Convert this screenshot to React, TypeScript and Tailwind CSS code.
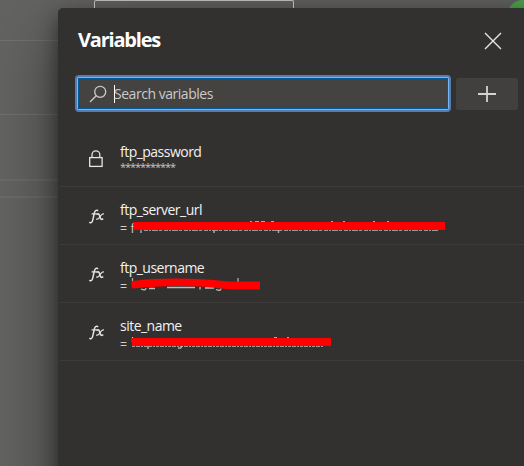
import type { ReactNode } from "react";

type Variable = {
  name: string;
  value: string;
  secret?: boolean;
  mask?: ReactNode;
};

function Lock() {
  return (
    <svg width="14" height="18" viewBox="0 0 14 18" fill="none" stroke="#e6e5e3" strokeWidth="1.3">
      <rect x="0.7" y="7.6" width="12.4" height="8.8" />
      <path d="M3 7.500V4.700a3.900 3.900 0 0 1 7.800 0v2.800" />
    </svg>
  );
}

function Fx() {
  return (
    <svg width="16" height="16" viewBox="0 0 16 16" fill="none" stroke="#e6e5e3" strokeLinecap="round">
      <path d="M.8 13.500c1.600.6 2.500-.5 3-2.600L5.300 4.200C5.800 2 6.800.8 8.600 1.500" strokeWidth="1.500" />
      <path d="M3 4.900h4.600" strokeWidth="1.100" />
      <path d="M8.300 5.100c1.500-.6 2 .3 2.400 2.100.5 2.300.9 3.700 3 2.900" strokeWidth="1.600" />
      <path d="M14.400 4.900c-1.500-.3-2.500 1.500-3.400 2.800-.8 1.200-1.700 2.900-3.400 2.500" strokeWidth="1.250" />
    </svg>
  );
}

const serverMask = (
  <svg className="absolute left-0 top-0" width="330" height="18" fill="none">
    <path d="M24 11.500H318" stroke="#999" strokeWidth="1" strokeDasharray="4 1 2 1 6 1 3 2" />
    <path d="M21 9v5M94 9v5M158.500 9v5" stroke="#aaa" strokeWidth="1.400" />
    <path d="M130 2.500h2M135 2.500h4M141 2.500h4M151 2.500h3M211 2.500h2M223 2.500h2M253 2.500h2M267 2.500h2" stroke="#aaa" />
    <path d="M13.500 7H325" stroke="#f00" strokeWidth="8" />
  </svg>
);

const userMask = (
  <svg className="absolute left-0 top-0" width="145" height="18" fill="none">
    <path d="M12.500 1v8M118 1v5" stroke="#aaa" strokeWidth="1.300" />
    <path d="M21 12q5 2 5-1M29 11.500h6M47 10.500h28M80 10v2.500M85 11h9M96 12.500q5 2 5-1" stroke="#bbb" strokeWidth="1.300" />
    <path d="M12 4C43 .7 72 .8 108 4.500h32v8H110C80 8 44 8 12 11.500z" fill="#f00" />
  </svg>
);

const siteMask = (
  <svg className="absolute left-0 top-0" width="220" height="18" fill="none">
    <path d="M12 11.500H204" stroke="#999" strokeWidth="1" strokeDasharray="3 1 4 1 2 1" />
    <path d="M28 10v4M58 13q4 1 4-3M12.500 2v5" stroke="#bbb" strokeWidth="1.300" />
    <path d="M154 2.500h3M167 2.500h2" stroke="#aaa" />
    <path d="M12 7H211" stroke="#f00" strokeWidth="8" />
  </svg>
);

const variables: Variable[] = [
  { name: "ftp_password", value: "***********", secret: true },
  { name: "ftp_server_url", value: "= f", mask: serverMask },
  { name: "ftp_username", value: "=", mask: userMask },
  { name: "site_name", value: "=", mask: siteMask },
];

function Row({ item }: { item: Variable }) {
  return (
    <li className="flex h-[58px] border-b border-[#3d3c3a] pt-[14px]">
      <div className="ml-[29px] flex h-8 w-[31px] shrink-0 items-center">
        {item.secret ? <Lock /> : <Fx />}
      </div>
      <div className="min-w-0 flex-1">
        <div className="h-[18px] text-[14px] font-medium leading-[17px] tracking-[-0.52px] text-[#f2f1ef]">{item.name}</div>
        <div
          className={
            item.secret
              ? "h-[18px] text-[11px] font-medium leading-[12px] tracking-[-1.05px] text-[#c8c6c4]"
              : "relative h-[18px] whitespace-pre text-[12.5px] font-medium leading-[19px] tracking-[0.1px] text-[#d0cecc]"
          }
        >
          {item.value}
          {item.mask}
        </div>
      </div>
    </li>
  );
}

export default function App() {
  return (
    <main className="relative h-[466px] w-[524px] overflow-hidden bg-[#636362] font-['Open_Sans','Noto_Sans',sans-serif]">
      <div className="absolute left-0 top-[40px] h-px w-full bg-[#717170]" />
      <div className="absolute left-0 top-[114px] h-px w-full bg-[#717170]" />
      <div className="absolute left-0 top-[179px] h-[2px] w-full bg-[#6b6b6a]" />
      <div className="absolute left-0 top-[196px] h-[2px] w-full bg-[#6b6b6a]" />
      <div className="absolute left-[507px] top-0 size-8 rounded-full bg-[#4fa84f]" />
      <section className="absolute left-[58px] top-[8px] h-[520px] w-[540px] rounded-tl-[5px] bg-[#32312f] shadow-[0_26px_70px_0_rgba(0,0,0,0.46),0_8px_20px_0_rgba(0,0,0,0.46)]">
        <div className="w-[466px]">
          <header className="flex h-[67px] items-start justify-between pl-5 pr-[22px]">
            <h1 className="pt-[18px] text-[20px] font-bold leading-7 tracking-[-1.2px] text-white">Variables</h1>
            <svg className="mt-[24px]" width="18" height="18" viewBox="0 0 18 18" stroke="#e6e5e3" strokeWidth="1.400">
              <path d="M1 1l16 16M17 1L1 17" />
            </svg>
          </header>
          <div className="flex items-center pl-[17px]">
            <div className="h-[37px] w-[376px] rounded-[4px] bg-[#587cae] p-[2px]">
              <div className="h-full rounded-[2px] bg-[#76b6f3] p-px">
                <div className="flex h-full items-center border border-[#005a9e] bg-[#444341] pl-[10px]">
                  <svg width="18" height="18" viewBox="0 0 18 18" fill="none" stroke="#cccac8" strokeWidth="1.300">
                    <circle cx="11.200" cy="6.800" r="5.500" />
                    <path d="M7.200 10.800L1 17" />
                  </svg>
                  <span className="ml-[7px] h-[18px] w-px bg-white" />
                  <span className="-ml-px text-[14px] font-medium leading-5 tracking-[-0.47px] text-[#cccac8]">Search variables</span>
                </div>
              </div>
            </div>
            <button className="ml-[5px] flex h-8 w-[62px] items-center justify-center rounded-[2px] bg-[#41403e]" aria-label="Add variable">
              <svg width="18" height="18" viewBox="0 0 18 18" stroke="#d4d3d1" strokeWidth="1.800"><path d="M0 9h18M9 1v16" /></svg>
            </button>
          </div>
          <ul className="ml-[2px] mt-[17px]">
            {variables.map((item) => <Row key={item.name} item={item} />)}
          </ul>
        </div>
      </section>
      <div className="absolute left-[94px] top-0 h-2 w-[200px] rounded-t-[2px] border border-b-0 border-[#b4b3b1]" />
    </main>
  );
}
